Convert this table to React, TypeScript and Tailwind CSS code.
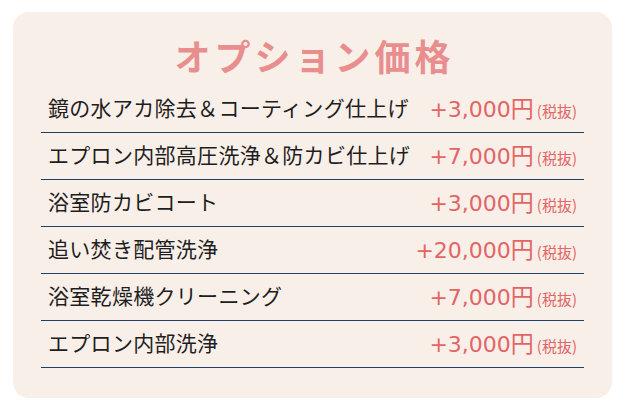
import React from "react";

const rows = [
  { name: "鏡の水アカ除去＆コーティング仕上げ", price: "+3,000" },
  { name: "エプロン内部高圧洗浄＆防カビ仕上げ", price: "+7,000" },
  { name: "浴室防カビコート", price: "+3,000" },
  { name: "追い焚き配管洗浄", price: "+20,000" },
  { name: "浴室乾燥機クリーニング", price: "+7,000" },
  { name: "エプロン内部洗浄", price: "+3,000" },
];

export default function App() {
  return (
    <div
      className="w-[629px] h-[411px] bg-white pt-[12px] pl-[13px]"
      style={{ fontFamily: '"Noto Sans CJK JP", "Noto Sans", sans-serif' }}
    >
      <div className="w-[599px] h-[386px] rounded-[16px] bg-[#f9efe9] px-[28px] pt-[19px]">
        <h1 className="text-center text-[36px] leading-[48px] font-bold tracking-[4px] pl-[4px] text-[#e98e8e] mb-[7px]">
          オプション価格
        </h1>
        <div className="flex flex-col">
          {rows.map((r) => (
            <div
              key={r.name}
              className="h-[47px] flex items-center justify-between border-b border-[#22406a] pl-[7px] pr-[7px] pb-[2px]"
            >
              <span className="text-[21px] tracking-[0.3px] text-[#1e1e1e] whitespace-nowrap">{r.name}</span>
              <span className="flex items-baseline whitespace-nowrap text-[#e26565]">
                <span
                  className="text-[22px]"
                  style={{ fontFamily: '"DejaVu Sans", "Noto Sans CJK JP", sans-serif' }}
                >
                  {r.price}
                </span>
                <span className="text-[23px]">円</span>
                <span className="text-[15px] ml-[3px]">(税抜)</span>
              </span>
            </div>
          ))}
        </div>
      </div>
    </div>
  );
}
